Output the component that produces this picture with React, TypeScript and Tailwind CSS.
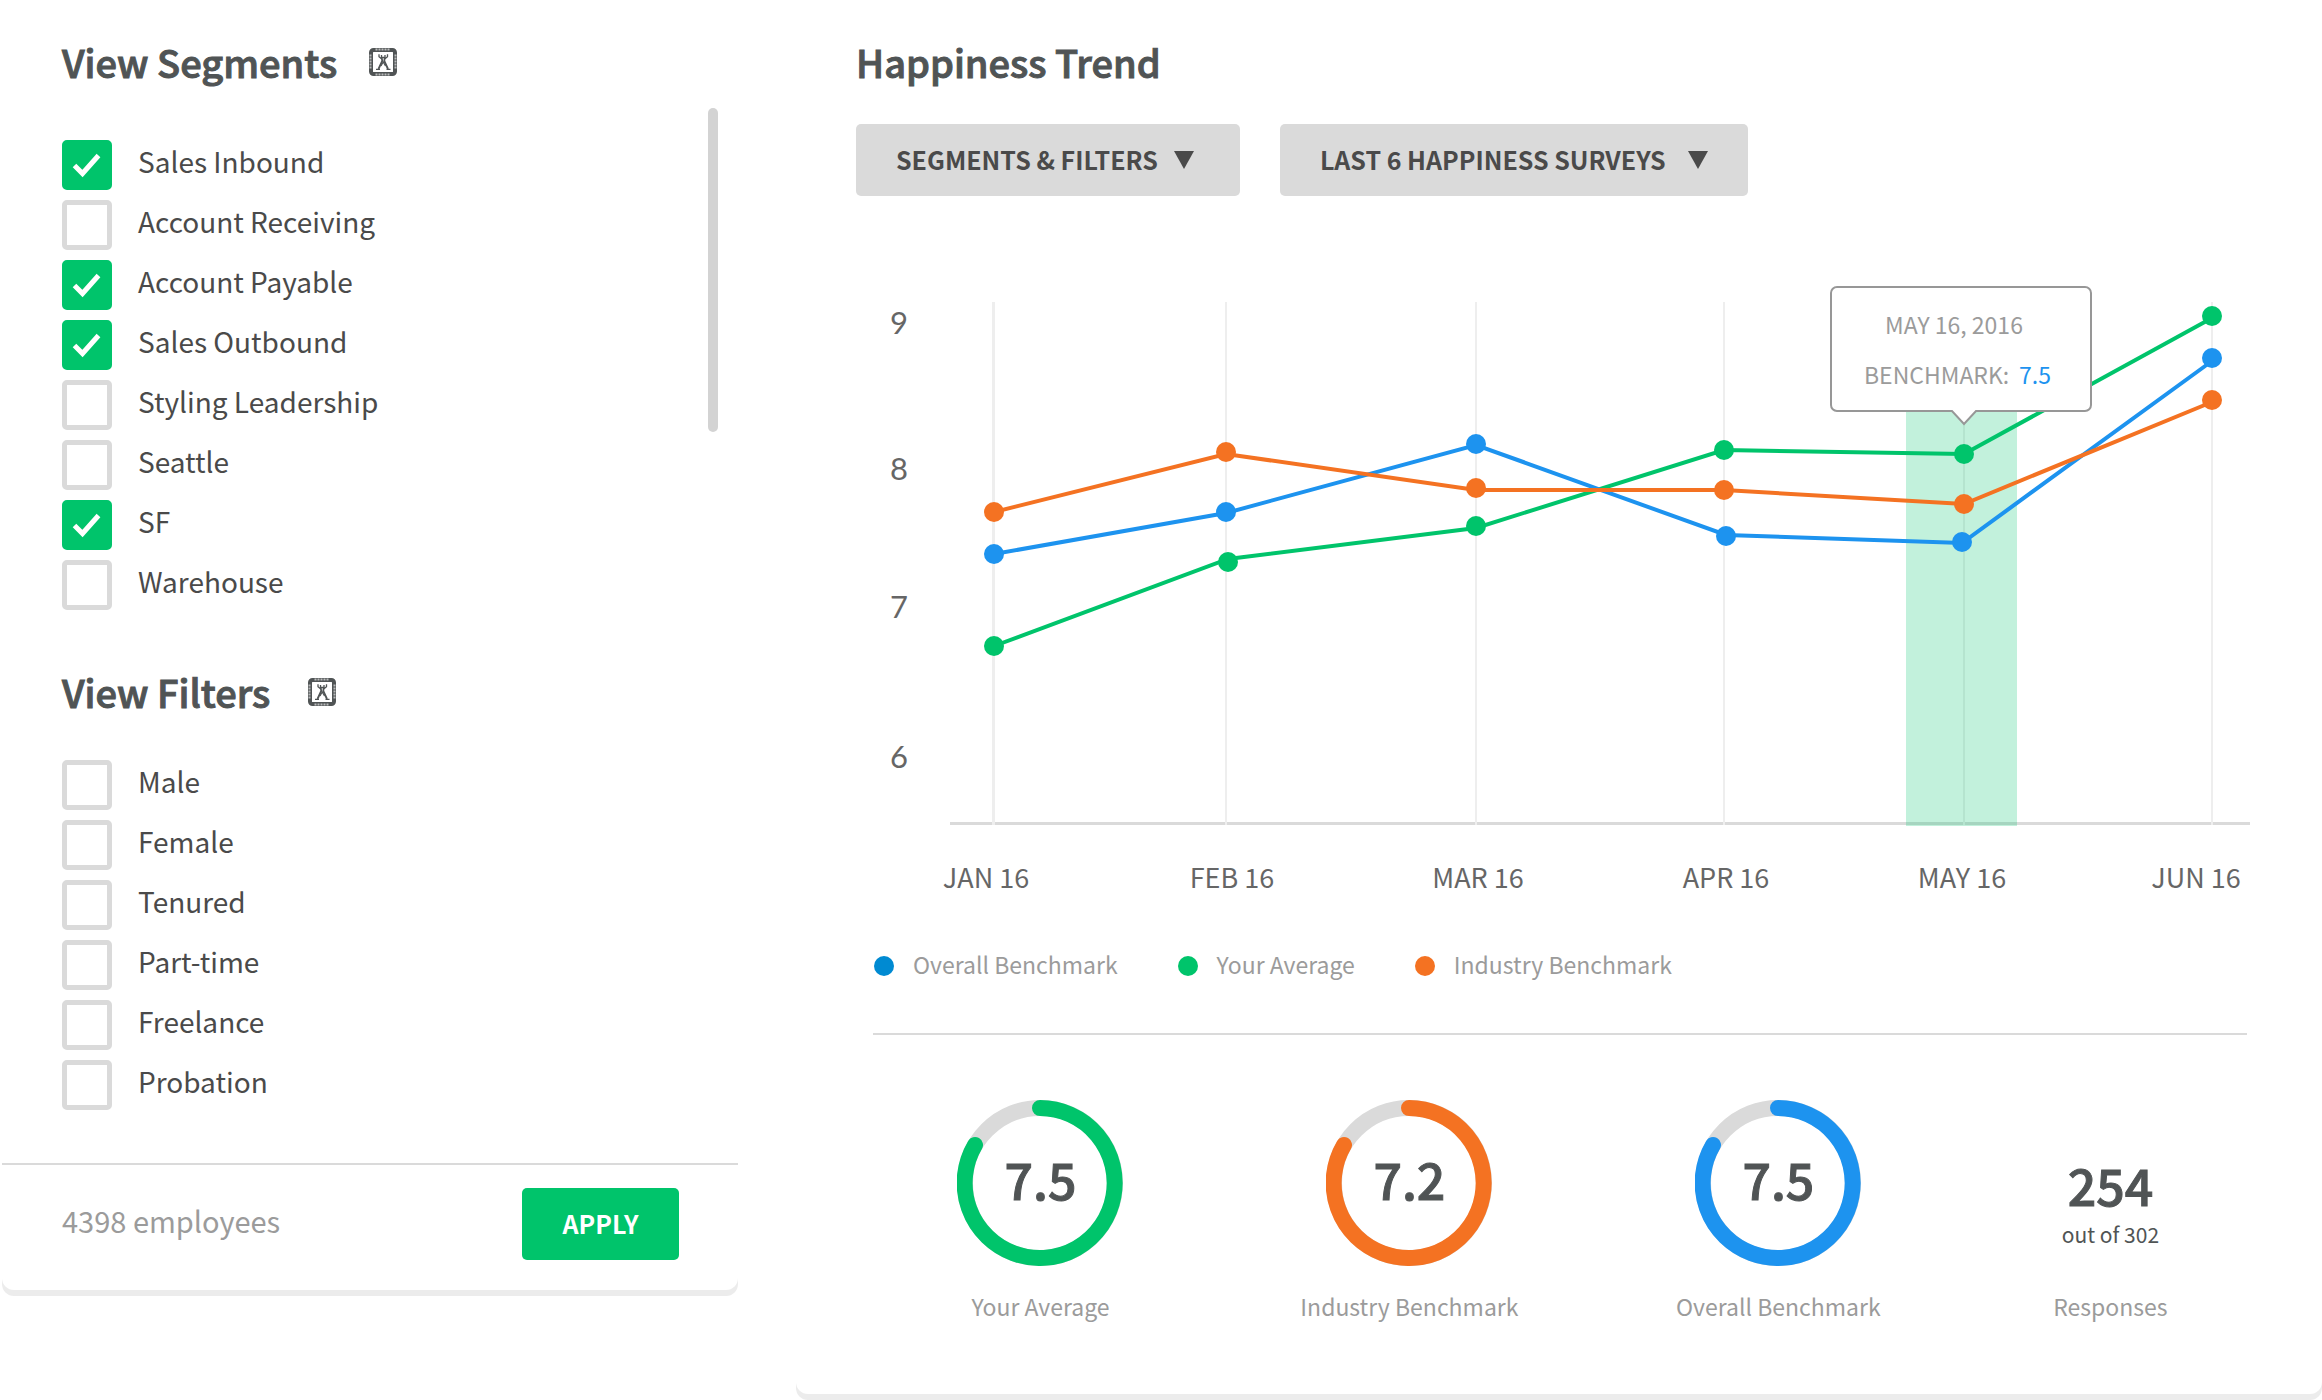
import { useState } from "react";

type Option = { label: string; checked: boolean };
type Point = { x: number; dot: number; line: number };
type Series = { name: string; color: string; points: Point[] };
type Stat = { label: string; value: string; color: string };

const GREEN = "#00c46b";
const ORANGE = "#f47222";
const BLUE = "#1d93ef";

const segments: Option[] = [
  { label: "Sales Inbound", checked: true },
  { label: "Account Receiving", checked: false },
  { label: "Account Payable", checked: true },
  { label: "Sales Outbound", checked: true },
  { label: "Styling Leadership", checked: false },
  { label: "Seattle", checked: false },
  { label: "SF", checked: true },
  { label: "Warehouse", checked: false },
];

const filters: Option[] = ["Male", "Female", "Tenured", "Part-time", "Freelance", "Probation"].map(
  (label) => ({ label, checked: false }),
);

const months = [
  { label: "JAN 16", x: 137, textX: 129 },
  { label: "FEB 16", x: 369, textX: 375 },
  { label: "MAR 16", x: 619, textX: 621 },
  { label: "APR 16", x: 867, textX: 869 },
  { label: "MAY 16", x: 1107, textX: 1105 },
  { label: "JUN 16", x: 1355, textX: 1339 },
];

const scores = [
  { label: "9", y: 54 },
  { label: "8", y: 200 },
  { label: "7", y: 338 },
  { label: "6", y: 488 },
];

const series: Series[] = [
  {
    name: "Your Average",
    color: GREEN,
    points: [
      { x: 137, dot: 366, line: 366 },
      { x: 371, dot: 282, line: 279 },
      { x: 619, dot: 246, line: 248 },
      { x: 867, dot: 170, line: 170 },
      { x: 1107, dot: 174, line: 174 },
      { x: 1355, dot: 36, line: 38 },
    ],
  },
  {
    name: "Overall Benchmark",
    color: BLUE,
    points: [
      { x: 137, dot: 274, line: 274 },
      { x: 369, dot: 232, line: 233 },
      { x: 619, dot: 164, line: 165 },
      { x: 869, dot: 256, line: 255 },
      { x: 1105, dot: 262, line: 263 },
      { x: 1355, dot: 78, line: 81 },
    ],
  },
  {
    name: "Industry Benchmark",
    color: ORANGE,
    points: [
      { x: 137, dot: 232, line: 232 },
      { x: 369, dot: 172, line: 174 },
      { x: 619, dot: 208, line: 210 },
      { x: 867, dot: 210, line: 210 },
      { x: 1107, dot: 224, line: 224 },
      { x: 1355, dot: 120, line: 122 },
    ],
  },
];

const stats: Stat[] = [
  { label: "Your Average", value: "7.5", color: GREEN },
  { label: "Industry Benchmark", value: "7.2", color: ORANGE },
  { label: "Overall Benchmark", value: "7.5", color: BLUE },
];

function InfoIcon() {
  return (
    <svg viewBox="0 0 28 28" className="size-7" fill="none" aria-hidden="true">
      <rect x="2" y="2" width="24" height="24" rx="2.500" stroke="#505455" strokeWidth="4" />
      <path d="M6.500 1.500h15M6.500 26.500h15M1.500 6.500v15M26.500 6.500v15" stroke="#ffffff" strokeOpacity="0.6" strokeWidth="2" strokeDasharray="2 1" />
      <path d="M10 6.300v2.400l2.500 2M18.500 6.300v2.400l-2.500 2M12.500 7v2.500h3.500V7" stroke="#505455" strokeWidth="1.300" />
      <path d="M12.800 10L13.200 13L9.500 21M15.700 10L15.300 13L19 21" stroke="#505455" strokeWidth="1.800" />
      <path d="M12 18L14.200 14L16.500 18" stroke="#505455" strokeWidth="1.200" />
      <path d="M7 21.300h4M17.500 21.300h4" stroke="#505455" strokeWidth="1.300" />
    </svg>
  );
}

function Triangle() {
  return (
    <svg viewBox="0 0 20 18" className="h-[18px] w-5" aria-hidden="true">
      <path d="M0 0h20L10 18z" fill="#4a4a4a" />
    </svg>
  );
}

function CheckRow({ label, checked }: Option) {
  const [on, setOn] = useState(checked);
  return (
    <label className="flex h-[50px] cursor-pointer items-center gap-[26px]">
      <span className="grid size-[50px] place-items-center">
        <input
          type="checkbox"
          checked={on}
          onChange={() => setOn(!on)}
          className="col-start-1 row-start-1 size-[50px] appearance-none rounded-[5px] border-[5px] border-[#dadada] bg-white checked:border-[#00c46b] checked:bg-[#00c46b]"
        />
        {on && (
          <svg viewBox="0 0 50 50" className="pointer-events-none col-start-1 row-start-1 size-[50px]" fill="none" aria-hidden="true">
            <path d="M12.500 25.500L20.500 33.500L36.500 15.500" stroke="#ffffff" strokeWidth="5" />
          </svg>
        )}
      </span>
      <span className="pb-2 text-[28px] leading-[42px] text-[#4a4a4a]">{label}</span>
    </label>
  );
}

function Sidebar() {
  return (
    <aside className="ml-0.5 w-[736px] shrink-0 rounded-b-xl bg-white pt-[42px] shadow-[0_6px_0_#ececec]">
      <div className="flex items-center gap-8 pl-[60px]">
        <h2 className="text-[38px] font-medium leading-10 text-[#505455] [-webkit-text-stroke:1px_#505455]">View Segments</h2>
        <InfoIcon />
      </div>
      <div className="mt-[26px] flex justify-between pl-[60px] pr-5">
        <div className="flex flex-col gap-2.5 pt-8">
          {segments.map((s) => (
            <CheckRow key={s.label} {...s} />
          ))}
        </div>
        <div className="h-[324px] w-2.5 rounded-full bg-[#d3d3d3]" />
      </div>
      <div className="mt-[62px] flex items-center gap-[38px] pl-[60px]">
        <h2 className="text-[38px] font-medium leading-10 text-[#505455] [-webkit-text-stroke:1px_#505455]">View Filters</h2>
        <InfoIcon />
      </div>
      <div className="mt-12 flex flex-col gap-2.5 pl-[60px]">
        {filters.map((f) => (
          <CheckRow key={f.label} {...f} />
        ))}
      </div>
      <div className="mt-[53px] flex items-center justify-between border-t-2 border-[#dadada] pb-[30px] pl-[60px] pr-[59px] pt-[23px]">
        <p className="pb-2 text-[29px] leading-[42px] text-[#9b9b9b]">4398 employees</p>
        <button type="button" className="h-[72px] w-[157px] rounded-[5px] bg-[#00c46b] text-[25px] font-bold text-white">
          APPLY
        </button>
      </div>
    </aside>
  );
}

function TrendChart() {
  return (
    <svg viewBox="-1 0 1402 620" className="block w-full" role="img" aria-label="Happiness trend, January to June 2016">
      <rect x="93" y="542" width="1300" height="3" fill="#dadada" />
      {months.map((m, i) => (
        <g key={m.label}>
          <rect x={i === 0 ? m.x - 2 : m.x - 1} y="22" width={i === 0 ? 3 : 2} height="523" fill="#eeeeee" />
          <text x={m.textX} y="608" textAnchor="middle" className="fill-[#666666] text-[27px]">
            {m.label}
          </text>
        </g>
      ))}
      {scores.map((s) => (
        <text key={s.label} x="42" y={s.y} textAnchor="middle" className="fill-[#666666] font-[Lato] text-[31px]">
          {s.label}
        </text>
      ))}
      <rect x="1049" y="110" width="111" height="436" fill={GREEN} fillOpacity="0.24" />
      {series.map((s) => (
        <g key={s.name}>
          <polyline points={s.points.map((p) => `${p.x},${p.line}`).join(" ")} fill="none" stroke={s.color} strokeWidth="4" />
          {s.points.map((p) => (
            <circle key={p.x} cx={p.x} cy={p.dot} r="10" fill={s.color} />
          ))}
        </g>
      ))}
      <path
        d="M980 7h248a6 6 0 0 1 6 6v112a6 6 0 0 1-6 6h-109l-12 13l-12-13h-115a6 6 0 0 1-6-6v-112a6 6 0 0 1 6-6z"
        fill="#ffffff"
        stroke="#979797"
        strokeWidth="2"
      />
      <text x="1097" y="54" textAnchor="middle" className="fill-[#9b9b9b] text-[23px]">
        MAY 16, 2016
      </text>
      <text x="1007" y="104" className="fill-[#9b9b9b] text-[23px]">
        BENCHMARK:
      </text>
      <text x="1162" y="104" className="text-[23px]" fill={BLUE}>
        7.5
      </text>
    </svg>
  );
}

function LegendItem({ color, label }: { color: string; label: string }) {
  return (
    <li className="flex items-center gap-[19px]">
      <span className="size-5 rounded-full" style={{ backgroundColor: color }} />
      <span className="pb-1 text-[23px] leading-8 text-[#9b9b9b]">{label}</span>
    </li>
  );
}

function Ring({ label, value, color }: Stat) {
  return (
    <div className="flex flex-col items-center">
      <div className="grid place-items-center">
        <svg viewBox="0 0 166 166" className="col-start-1 row-start-1 size-[166px]" fill="none" aria-hidden="true">
          <circle cx="83" cy="83" r="75" stroke="#dadada" strokeWidth="16" />
          <path d="M83 8A75 75 0 1 1 18 45" stroke={color} strokeWidth="16" strokeLinecap="round" />
        </svg>
        <span className="col-start-1 row-start-1 pb-2.5 text-[50px] font-medium leading-[60px] text-[#505455] [-webkit-text-stroke:1px_#505455]">
          {value}
        </span>
      </div>
      <p className="mt-[22px] text-[23px] leading-9 text-[#9b9b9b]">{label}</p>
    </div>
  );
}

export default function App() {
  return (
    <div className="flex items-start gap-[58px] bg-white pb-1.5 font-['Noto_Sans_CJK_SC','Noto_Sans',sans-serif]">
      <Sidebar />
      <main className="min-w-0 flex-1 rounded-b-xl bg-white pb-[70px] pl-[60px] pr-16 pt-[42px] shadow-[0_6px_0_#ececec]">
        <h1 className="text-[38px] font-medium leading-10 text-[#505455] [-webkit-text-stroke:1px_#505455]">Happiness Trend</h1>
        <div className="mt-[42px] flex gap-10">
          <button
            type="button"
            aria-haspopup="menu"
            className="flex h-[72px] w-[384px] items-center justify-between rounded-[5px] bg-[#dadada] pl-10 pr-[46px] text-[25px] font-bold text-[#4a4a4a]"
          >
            SEGMENTS &amp; FILTERS
            <Triangle />
          </button>
          <div className="grid w-[468px] items-center">
            <select
              aria-label="Survey range"
              className="col-start-1 row-start-1 h-[72px] w-full appearance-none rounded-[5px] bg-[#dadada] pl-10 text-[25px] font-bold text-[#4a4a4a]"
            >
              <option>LAST 6 HAPPINESS SURVEYS</option>
            </select>
            <span className="pointer-events-none col-start-1 row-start-1 justify-self-end pr-10">
              <Triangle />
            </span>
          </div>
        </div>
        <div className="mt-[84px]">
          <TrendChart />
        </div>
        <ul className="ml-[18px] mt-12 flex gap-[60px]">
          <LegendItem color="#008ad2" label="Overall Benchmark" />
          <LegendItem color={GREEN} label="Your Average" />
          <LegendItem color={ORANGE} label="Industry Benchmark" />
        </ul>
        <hr className="ml-[17px] mr-[11px] mt-[49px] border-t-2 border-[#dadada]" />
        <section className="mt-[65px] grid grid-cols-[5fr_5fr_5fr_4fr]">
          {stats.map((s) => (
            <Ring key={s.label} {...s} />
          ))}
          <div className="flex flex-col items-center pt-[54px]">
            <span className="text-[50px] font-medium leading-[60px] text-[#505455] [-webkit-text-stroke:1px_#505455]">254</span>
            <span className="mt-1 text-[21px] leading-8 text-[#505455]">out of 302</span>
            <p className="mt-[38px] text-[23px] leading-9 text-[#9b9b9b]">Responses</p>
          </div>
        </section>
      </main>
    </div>
  );
}
